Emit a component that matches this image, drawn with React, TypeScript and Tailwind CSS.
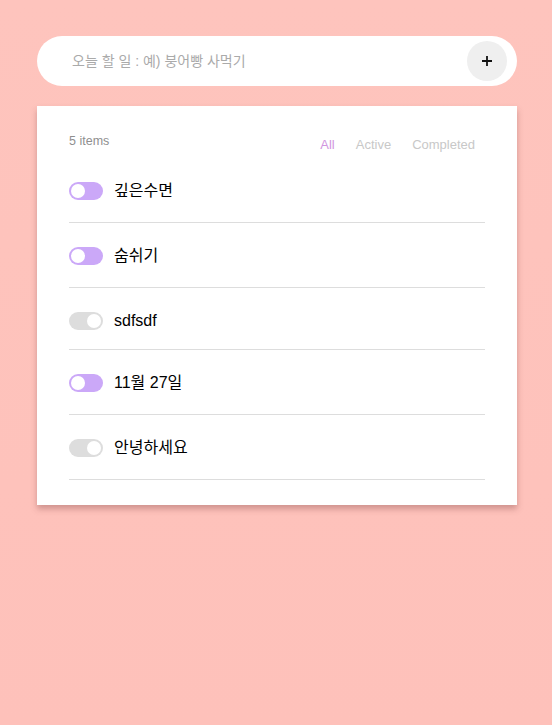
import React from "react";

const todos = [
  { text: "깊은수면", on: true },
  { text: "숨쉬기", on: true },
  { text: "sdfsdf", on: false },
  { text: "11월 27일", on: true },
  { text: "안녕하세요", on: false },
];

function Toggle({ on }: { on: boolean }) {
  return (
    <div
      className={
        on
          ? "w-[34px] h-[18px] rounded-full bg-[#cba8f8] flex items-center justify-start px-[2px]"
          : "w-[34px] h-[18px] rounded-full bg-[#dddddd] flex items-center justify-end px-[2px]"
      }
    >
      <div className="w-[14px] h-[14px] rounded-full bg-white" />
    </div>
  );
}

export default function App() {
  return (
    <div
      className="min-h-[725px] w-full bg-gradient-to-b from-[#fec4bd] to-[#fec1ba] pt-[36px] px-[37px]"
      style={{ fontFamily: '"Liberation Sans", "Noto Sans CJK KR", sans-serif' }}
    >
      <div className="h-[50px] w-[480px] bg-white rounded-full flex items-center pl-[35px] pr-[10px]">
        <span className="flex-1 text-[14px] text-[#aaaaaa]">오늘 할 일 : 예) 붕어빵 사먹기</span>
        <div className="w-[40px] h-[40px] rounded-full bg-[#efefef] flex items-center justify-center">
          <svg width="12" height="12" viewBox="0 0 12 12">
            <path d="M6 1v10M1 6h10" stroke="#111" strokeWidth="1.8" />
          </svg>
        </div>
      </div>

      <div className="mt-[20px] w-[480px] bg-white shadow-[0_4px_6px_rgba(120,60,60,0.35)] px-[32px] pt-[27px] pb-[25px]">
        <div className="flex items-start justify-between pr-[10px]">
          <span className="text-[12.5px] text-[#8f8f8f] leading-[16px]">5 items</span>
          <div className="flex gap-[21px] text-[13px] leading-[16px] mt-[4px]">
            <span className="text-[#d294e0]">All</span>
            <span className="text-[#c8c8c8]">Active</span>
            <span className="text-[#c8c8c8]">Completed</span>
          </div>
        </div>
        <div className="mt-[29px]">
          {todos.map((t, i) => (
            <div
              key={i}
              className={
                i === 0
                  ? "border-b border-[#dddddd] pb-[22px]"
                  : i === 2
                  ? "border-b border-[#dddddd] pt-[24px] pb-[19px]"
                  : "border-b border-[#dddddd] pt-[24px] pb-[22px]"
              }
            >
              <div className="flex items-center gap-[11px] h-[18px]">
                <Toggle on={t.on} />
                <span className="text-[16px] text-black">{t.text}</span>
              </div>
            </div>
          ))}
        </div>
      </div>
    </div>
  );
}
